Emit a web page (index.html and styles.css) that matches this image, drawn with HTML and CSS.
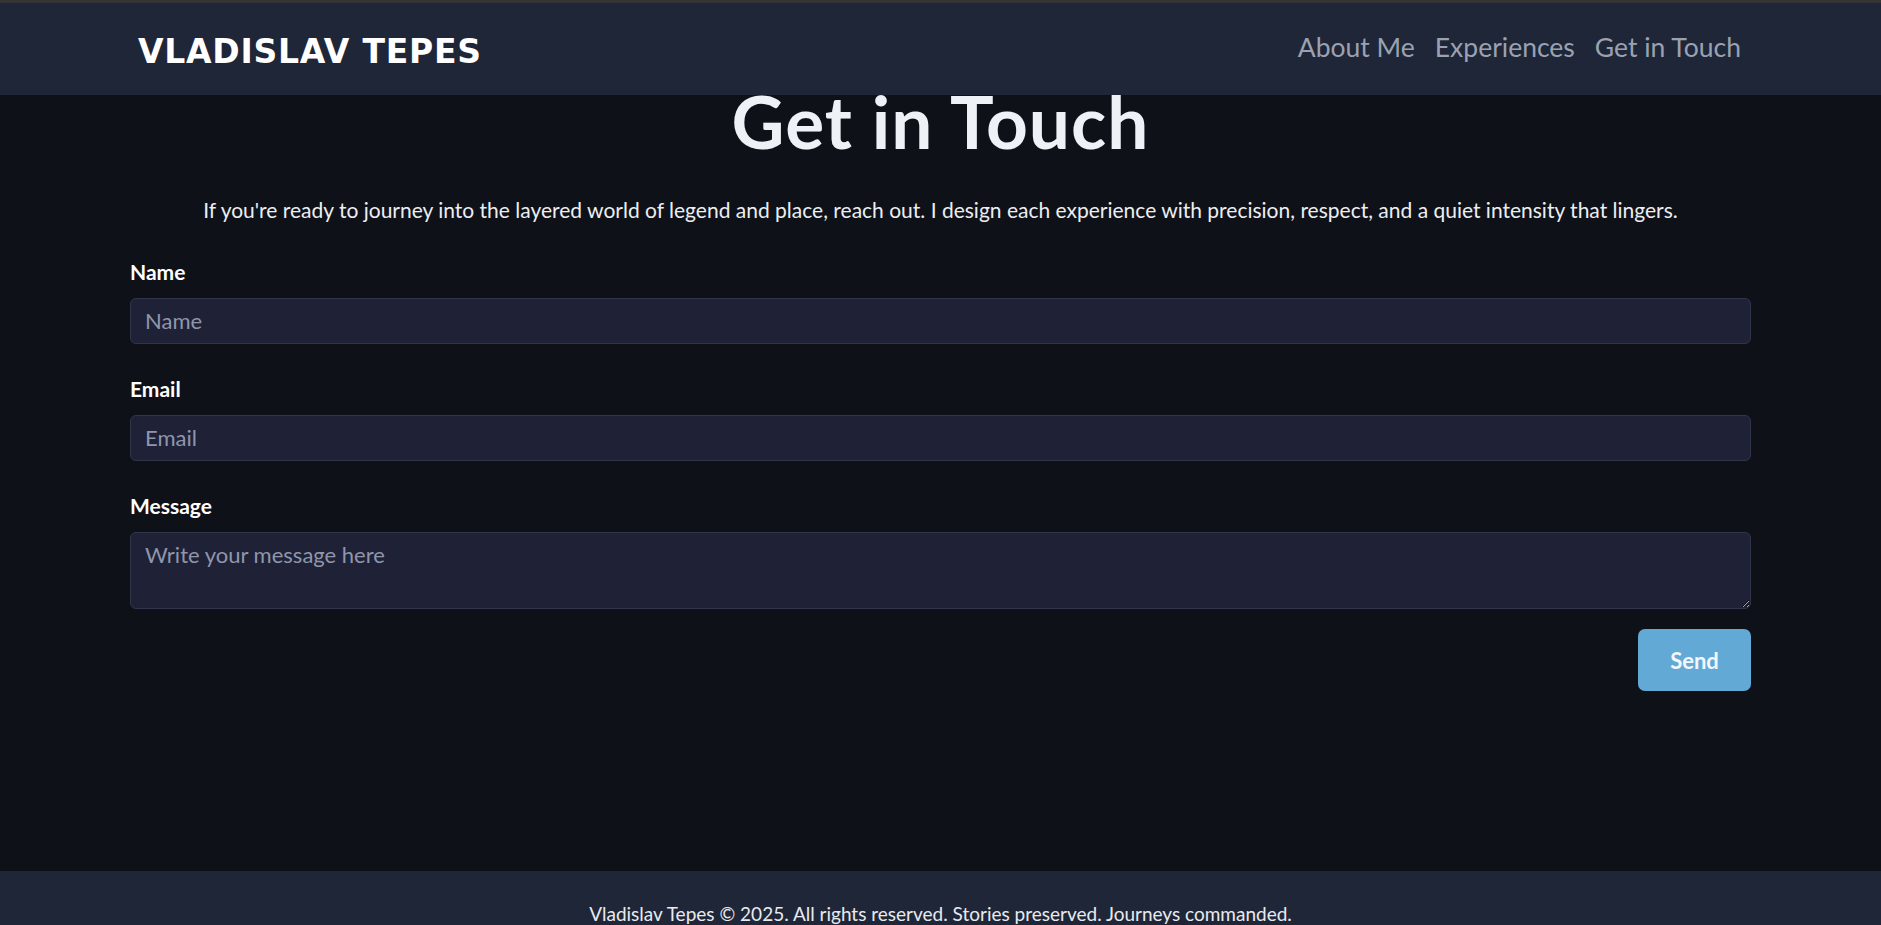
FILE: index.html
```html
<!DOCTYPE html>
<html lang="en">
<head>
<meta charset="utf-8">
<title>Vladislav Tepes — Get in Touch</title>
<link rel="stylesheet" href="styles.css">
</head>
<body>
<header class="site-header">
  <div class="logo">VLADISLAV TEPES</div>
  <nav class="nav">
    <a href="#about">About Me</a>
    <a href="#experiences">Experiences</a>
    <a href="#contact">Get in Touch</a>
  </nav>
</header>

<main class="contact">
  <h1 class="contact-title">Get in Touch</h1>
  <p class="contact-intro">If you're ready to journey into the layered world of legend and place, reach out. I design each experience with precision, respect, and a quiet intensity that lingers.</p>

  <form class="contact-form">
    <div class="field">
      <label for="name">Name</label>
      <input id="name" type="text" placeholder="Name">
    </div>
    <div class="field">
      <label for="email">Email</label>
      <input id="email" type="email" placeholder="Email">
    </div>
    <div class="field">
      <label for="message">Message</label>
      <textarea id="message" placeholder="Write your message here"></textarea>
    </div>
    <div class="actions">
      <button type="button" class="send-btn">Send</button>
    </div>
  </form>
</main>

<footer class="site-footer">
  <p>Vladislav Tepes © 2025. All rights reserved. Stories preserved. Journeys commanded.</p>
</footer>
</body>
</html>
```

FILE: styles.css
```css
* {
  box-sizing: border-box;
}

html, body {
  margin: 0;
  padding: 0;
}

body {
  background: #0f1118;
  color: #f3f4f6;
  font-family: Lato, "Liberation Sans", sans-serif;
}

.site-header {
  position: fixed;
  top: 0;
  left: 0;
  right: 0;
  z-index: 10;
  height: 95px;
  border-top: 3px solid #343434;
  background: #1f2637;
  display: flex;
  align-items: center;
  justify-content: space-between;
  padding: 4px 140px 0 138px;
}

.logo {
  font-family: "DejaVu Sans", sans-serif;
  font-weight: bold;
  font-size: 33px;
  letter-spacing: 0.75px;
  color: #ffffff;
}

.nav {
  display: flex;
  gap: 20px;
  margin-top: -8px;
}

.nav a {
  font-size: 26.5px;
  color: #9aa2b1;
  text-decoration: none;
}

.contact {
  margin: 0 130px;
  padding: 78px 0 180px;
}

.contact-title {
  margin: 0;
  font-size: 73px;
  line-height: 1.2;
  font-weight: 700;
  letter-spacing: 1px;
  text-align: center;
  color: #eef1f6;
}

.contact-intro {
  margin: 29px 0 0;
  font-size: 21px;
  line-height: 30px;
  text-align: center;
  color: #eceef2;
}

.contact-form {
  margin-top: 34px;
  display: flex;
  flex-direction: column;
  gap: 32px;
}

.field {
  display: flex;
  flex-direction: column;
  gap: 14px;
}

.field label {
  font-size: 21px;
  line-height: 1.2;
  font-weight: 700;
  color: #ffffff;
}

.field input,
.field textarea {
  width: 100%;
  font-family: inherit;
  font-size: 22px;
  color: #e5e7eb;
  background: #1f2237;
  border: 1px solid #30354a;
  border-radius: 6px;
  padding: 8px 14px;
  outline: none;
}

.field input {
  height: 46px;
}

.field textarea {
  height: 77px;
  resize: vertical;
  display: block;
}

.field input::placeholder,
.field textarea::placeholder {
  color: #8f96ac;
}

.actions {
  display: flex;
  justify-content: flex-end;
  margin-top: -12px;
}

.send-btn {
  width: 113px;
  height: 62px;
  border: none;
  border-radius: 7px;
  background: #63a9d6;
  color: #f4f7fb;
  font-family: inherit;
  font-size: 22px;
  font-weight: 700;
  cursor: pointer;
}

.site-footer {
  background: #1f2637;
  padding: 30px 0 30px;
  text-align: center;
}

.site-footer p {
  margin: 0;
  font-size: 19px;
  line-height: 25px;
  color: #e8eaef;
}
```
